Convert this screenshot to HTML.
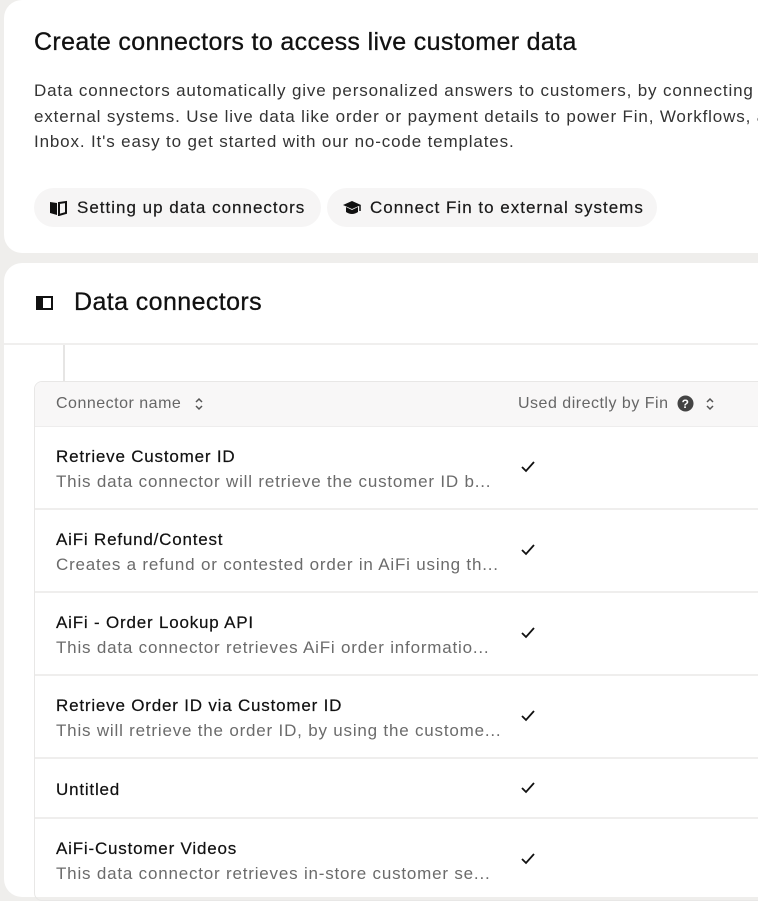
<!DOCTYPE html>
<html><head><meta charset="utf-8">
<style>
*{margin:0;padding:0;box-sizing:border-box}
body{width:758px;height:900px;overflow:hidden;background:#efeeec;font-family:"Liberation Sans",sans-serif;color:#1a1a1a;position:relative}
.card{position:absolute;background:#fff;border-radius:18px}
.c1{left:4px;top:0;width:800px;height:253px}
.c2{left:4px;top:263px;width:800px;height:634px}
h1{position:absolute;left:30px;top:28px;font-size:25px;letter-spacing:0.35px;font-weight:normal;color:#111;-webkit-text-stroke:0.3px #111;white-space:nowrap}
.desc{position:absolute;left:30px;top:78px;font-size:17px;letter-spacing:0.85px;line-height:25.5px;color:#333;width:800px;white-space:nowrap}
.pill{position:absolute;top:188px;height:39px;border-radius:20px;background:#f6f5f5;font-size:17px;letter-spacing:1px;line-height:40px;color:#1a1a1a;padding-left:43px;-webkit-text-stroke:0.2px #1a1a1a;white-space:nowrap}
.pill svg{position:absolute;left:15px;top:12px}
h2{position:absolute;left:70px;top:25px;font-size:25px;letter-spacing:0.4px;font-weight:normal;color:#111;-webkit-text-stroke:0.3px #111}
.hline{position:absolute;left:0;top:80px;width:800px;height:2px;background:#f0efee}
.vl{position:absolute;left:59px;top:82px;width:2px;height:38px;background:#e6e5e4}
.table{position:absolute;left:30px;top:118px;width:800px;height:520px;border:1px solid #e8e7e6;border-radius:8px;overflow:hidden}
.th{height:45px;background:#f8f7f7;border-bottom:1px solid #eeeded;position:relative;font-size:16px;letter-spacing:0.5px;color:#666}
.th span{position:absolute;top:13px;white-space:nowrap}
.row{position:relative;border-bottom:2px solid #efeeed}
.nm{position:absolute;left:21px;font-size:17px;letter-spacing:0.8px;color:#111;-webkit-text-stroke:0.2px #111;white-space:nowrap}
.ds{position:absolute;left:21px;font-size:17px;letter-spacing:0.8px;color:#6b6b6b;white-space:nowrap}
.ck{position:absolute;left:485px}
</style></head><body>
<div class="card c1">
<h1>Create connectors to access live customer data</h1>
<div class="desc">Data connectors automatically give personalized answers to customers, by connecting to<br>external systems. Use live data like order or payment details to power Fin, Workflows, and<br>Inbox. It's easy to get started with our no-code templates.</div>
<div class="pill" style="left:30px;width:287px">
<svg width="18" height="16" viewBox="0 0 18 16"><path d="M1 2 L8 3 L8 15 L1 13 Z" fill="#111"/><path d="M10 3 L17 2 L17 13 L10 15 Z" fill="none" stroke="#111" stroke-width="2"/></svg>Setting up data connectors</div>
<div class="pill" style="left:323px;width:330px">
<svg width="20" height="16" viewBox="0 0 20 16"><path d="M10 1 L19 5 L10 9 L1 5 Z" fill="#111"/><path d="M4 7 V12 Q10 16 16 12 V7 L10 10 Z" fill="#111"/><path d="M18 5 V11" stroke="#111" stroke-width="1.5"/></svg>Connect Fin to external systems</div>
</div>
<div class="card c2">
<svg style="position:absolute;left:32px;top:33px" width="17" height="14" viewBox="0 0 17 14"><rect x="1" y="1" width="15" height="12" fill="none" stroke="#111" stroke-width="2"/><rect x="1" y="1" width="6" height="12" fill="#111"/></svg>
<h2>Data connectors</h2>
<div class="hline"></div>
<div class="vl"></div>
<div class="table">
<div class="th"><span style="left:21px">Connector name</span>
<svg style="position:absolute;left:159px;top:14px" width="10" height="16" viewBox="0 0 10 16"><path d="M2 6 L5 3 L8 6 M2 10 L5 13 L8 10" fill="none" stroke="#555" stroke-width="1.5"/></svg>
<span style="left:483px">Used directly by Fin</span>
<svg style="position:absolute;left:642px;top:13px" width="17" height="17" viewBox="0 0 17 17"><circle cx="8.5" cy="8.5" r="8" fill="#444"/><text x="8.5" y="13" font-size="12" font-weight="bold" fill="#fff" text-anchor="middle" font-family="Liberation Sans">?</text></svg>
<svg style="position:absolute;left:670px;top:14px" width="10" height="16" viewBox="0 0 10 16"><path d="M2 6 L5 3 L8 6 M2 10 L5 13 L8 10" fill="none" stroke="#555" stroke-width="1.5"/></svg>
</div>
<div class="row" style="height:83px"><div class="nm" style="top:20px">Retrieve Customer ID</div><div class="ds" style="top:45px">This data connector will retrieve the customer ID b...</div><svg class="ck" style="top:33px" width="16" height="14" viewBox="0 0 16 14"><path d="M2 7 L6 11 L14 2" fill="none" stroke="#111" stroke-width="1.8"/></svg></div>
<div class="row" style="height:83px"><div class="nm" style="top:20px">AiFi Refund/Contest</div><div class="ds" style="top:45px">Creates a refund or contested order in AiFi using th...</div><svg class="ck" style="top:33px" width="16" height="14" viewBox="0 0 16 14"><path d="M2 7 L6 11 L14 2" fill="none" stroke="#111" stroke-width="1.8"/></svg></div>
<div class="row" style="height:83px"><div class="nm" style="top:20px">AiFi - Order Lookup API</div><div class="ds" style="top:45px">This data connector retrieves AiFi order informatio...</div><svg class="ck" style="top:33px" width="16" height="14" viewBox="0 0 16 14"><path d="M2 7 L6 11 L14 2" fill="none" stroke="#111" stroke-width="1.8"/></svg></div>
<div class="row" style="height:83px"><div class="nm" style="top:20px">Retrieve Order ID via Customer ID</div><div class="ds" style="top:45px">This will retrieve the order ID, by using the custome...</div><svg class="ck" style="top:33px" width="16" height="14" viewBox="0 0 16 14"><path d="M2 7 L6 11 L14 2" fill="none" stroke="#111" stroke-width="1.8"/></svg></div>
<div class="row" style="height:60px"><div class="nm" style="top:21px">Untitled</div><svg class="ck" style="top:22px" width="16" height="14" viewBox="0 0 16 14"><path d="M2 7 L6 11 L14 2" fill="none" stroke="#111" stroke-width="1.8"/></svg></div>
<div class="row" style="height:90px;border:none"><div class="nm" style="top:20px">AiFi-Customer Videos</div><div class="ds" style="top:45px">This data connector retrieves in-store customer se...</div><svg class="ck" style="top:33px" width="16" height="14" viewBox="0 0 16 14"><path d="M2 7 L6 11 L14 2" fill="none" stroke="#111" stroke-width="1.8"/></svg></div>
</div>
</div>
</body></html>
